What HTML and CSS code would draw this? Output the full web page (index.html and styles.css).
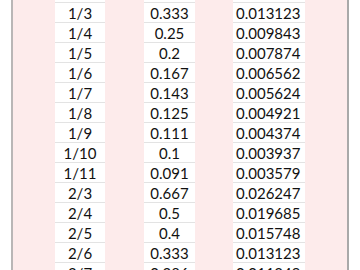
FILE: index.html
```html
<!DOCTYPE html>
<html>
<head>
<meta charset="utf-8">
<link rel="stylesheet" href="styles.css">
</head>
<body>
<div class="sheet">
  <div class="rows">
    <div class="row"><div class="cell c1">1/2</div><div class="cell c2">0.5</div><div class="cell c3">0.019685</div></div>
    <div class="row"><div class="cell c1">1/3</div><div class="cell c2">0.333</div><div class="cell c3">0.013123</div></div>
    <div class="row"><div class="cell c1">1/4</div><div class="cell c2">0.25</div><div class="cell c3">0.009843</div></div>
    <div class="row"><div class="cell c1">1/5</div><div class="cell c2">0.2</div><div class="cell c3">0.007874</div></div>
    <div class="row"><div class="cell c1">1/6</div><div class="cell c2">0.167</div><div class="cell c3">0.006562</div></div>
    <div class="row"><div class="cell c1">1/7</div><div class="cell c2">0.143</div><div class="cell c3">0.005624</div></div>
    <div class="row"><div class="cell c1">1/8</div><div class="cell c2">0.125</div><div class="cell c3">0.004921</div></div>
    <div class="row"><div class="cell c1">1/9</div><div class="cell c2">0.111</div><div class="cell c3">0.004374</div></div>
    <div class="row"><div class="cell c1">1/10</div><div class="cell c2">0.1</div><div class="cell c3">0.003937</div></div>
    <div class="row"><div class="cell c1">1/11</div><div class="cell c2">0.091</div><div class="cell c3">0.003579</div></div>
    <div class="row"><div class="cell c1">2/3</div><div class="cell c2">0.667</div><div class="cell c3">0.026247</div></div>
    <div class="row"><div class="cell c1">2/4</div><div class="cell c2">0.5</div><div class="cell c3">0.019685</div></div>
    <div class="row"><div class="cell c1">2/5</div><div class="cell c2">0.4</div><div class="cell c3">0.015748</div></div>
    <div class="row"><div class="cell c1">2/6</div><div class="cell c2">0.333</div><div class="cell c3">0.013123</div></div>
    <div class="row"><div class="cell c1">2/7</div><div class="cell c2">0.286</div><div class="cell c3">0.011249</div></div>
  </div>
</div>
</body>
</html>
```
FILE: styles.css
```css
html, body {
  margin: 0;
  padding: 0;
  background: #ffffff;
}
body {
  width: 360px;
  height: 270px;
  overflow: hidden;
  padding-left: 11px;
  box-sizing: border-box;
  font-family: "Lato", "Open Sans", sans-serif;
  font-size: 15px;
  color: #111111;
}
.sheet {
  width: 338px;
  height: 270px;
  box-sizing: border-box;
  border-left: 2px solid #b9b6b6;
  border-right: 2px solid #a9a9a9;
  background: #fdebeb;
  overflow: hidden;
}
.rows {
  margin-top: -17px;
  display: flex;
  flex-direction: column;
}
.row {
  display: grid;
  grid-template-columns: 42px 50px 39px 51px 38px 72px 1fr;
  height: 20px;
}
.cell {
  background: #ffffff;
  border-bottom: 1px solid #e3e3e3;
  height: 19px;
  line-height: 20px;
  white-space: nowrap;
}
.c1 { grid-column: 2; text-align: center; }
.c2 { grid-column: 4; text-align: center; }
.c3 { grid-column: 6; text-align: left; padding-left: 3px; }
```
